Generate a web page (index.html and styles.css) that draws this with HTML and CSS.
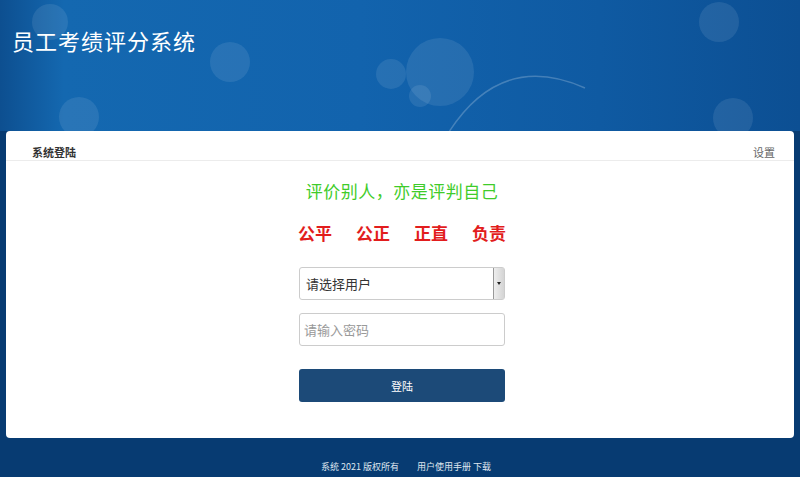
FILE: index.html
```html
<!DOCTYPE html>
<html lang="zh-CN">
<head>
  <meta charset="UTF-8" />
  <title>员工考绩评分系统</title>
  <link rel="stylesheet" href="styles.css">
</head>
<body>
  <div class="banner">
    <svg class="banner-deco" width="800" height="140" viewBox="0 0 800 140">
      <g fill="#ffffff" fill-opacity="0.09">
        <circle cx="50" cy="22" r="18"/>
        <circle cx="230" cy="62" r="20"/>
        <circle cx="391" cy="74" r="15"/>
        <circle cx="440" cy="72" r="34"/>
        <circle cx="420" cy="96" r="11"/>
        <circle cx="719" cy="22" r="20"/>
        <circle cx="79" cy="117" r="20"/>
        <circle cx="733" cy="118" r="20"/>
      </g>
      <path d="M447 135 Q500 50 585 88" stroke="#ffffff" stroke-opacity="0.22" fill="none" stroke-width="1.5"/>
    </svg>
    <h1>员工考绩评分系统</h1>
  </div>

  <div class="panel">
    <div class="panel-head">
      <span class="panel-title">系统登陆</span>
      <span class="panel-link">设置</span>
    </div>
    <div class="login">
      <p class="motto">评价别人，亦是评判自己</p>
      <p class="values">
        <span>公平</span><span>公正</span><span>正直</span><span>负责</span>
      </p>
      <div class="select-box">
        <span>请选择用户</span>
        <span class="select-arrow"></span>
      </div>
      <input class="pwd" type="password" placeholder="请输入密码">
      <button class="login-btn">登陆</button>
    </div>
  </div>

  <div class="footer">
    <span>系统 2021 版权所有</span>
    <span>用户使用手册 下载</span>
  </div>
</body>
</html>
```

FILE: styles.css
```css
body {
  margin: 0;
  height: 477px;
  overflow: hidden;
  background-color: #073b72;
  font-family: 'Noto Sans CJK SC', sans-serif;
  color: #333;
}

.banner {
  position: relative;
  height: 131px;
  background: linear-gradient(90deg, #0d4f90 0%, #1468b0 8%, #1263ad 45%, #0f5aa2 75%, #0c4f93 100%);
  overflow: hidden;
}

.banner-deco {
  position: absolute;
  left: 0;
  top: 0;
}

.banner h1 {
  position: relative;
  margin: 0;
  padding: 24px 0 0 12px;
  font-size: 22px;
  font-weight: normal;
  color: #fff;
  letter-spacing: 1px;
}

.panel {
  margin: 0 6px;
  height: 307px;
  background: #fff;
  border-radius: 4px;
}

.panel-head {
  display: flex;
  justify-content: space-between;
  align-items: center;
  height: 29px;
  padding: 0 19px 0 26px;
  border-bottom: 1px solid #ececec;
  font-size: 11px;
}

.panel-title {
  font-weight: bold;
  color: #333;
  padding-top: 12px;
}

.panel-link {
  color: #666;
  padding-top: 12px;
}

.login {
  display: flex;
  flex-direction: column;
  align-items: center;
  padding-left: 4px;
}

.motto {
  margin: 17px 0 0 0;
  font-size: 17px;
  color: #3fcc2a;
  letter-spacing: 0.5px;
}

.values {
  margin: 17px 0 0 0;
  display: flex;
  gap: 24px;
  font-size: 17px;
  font-weight: bold;
  color: #e21d1d;
}

.select-box {
  margin-top: 22px;
  width: 198px;
  height: 31px;
  border: 1px solid #ccc;
  border-radius: 3px;
  display: flex;
  align-items: center;
  justify-content: space-between;
  font-size: 13px;
  color: #333;
  padding-left: 6px;
}

.select-arrow {
  width: 10px;
  height: 31px;
  border-left: 1px solid #999;
  background: linear-gradient(90deg, #eee, #d4d4d4);
  position: relative;
}

.select-arrow::after {
  content: '';
  position: absolute;
  left: 3px;
  top: 14px;
  border-left: 2px solid transparent;
  border-right: 2px solid transparent;
  border-top: 3px solid #222;
}

.pwd {
  margin-top: 13px;
  width: 206px;
  height: 33px;
  box-sizing: border-box;
  border: 1px solid #ccc;
  border-radius: 3px;
  padding: 0 4px;
  font-family: 'Noto Sans CJK SC', sans-serif;
  font-size: 13px;
}

.pwd::placeholder {
  color: #999;
}

.login-btn {
  margin-top: 23px;
  width: 206px;
  height: 33px;
  border: none;
  border-radius: 3px;
  background-color: #1c4a78;
  color: #fff;
  font-family: 'Noto Sans CJK SC', sans-serif;
  font-size: 11px;
}

.footer {
  display: flex;
  justify-content: center;
  gap: 18px;
  padding: 22px 0 0 12px;
  font-size: 9px;
  color: #dfe6ef;
}
```
